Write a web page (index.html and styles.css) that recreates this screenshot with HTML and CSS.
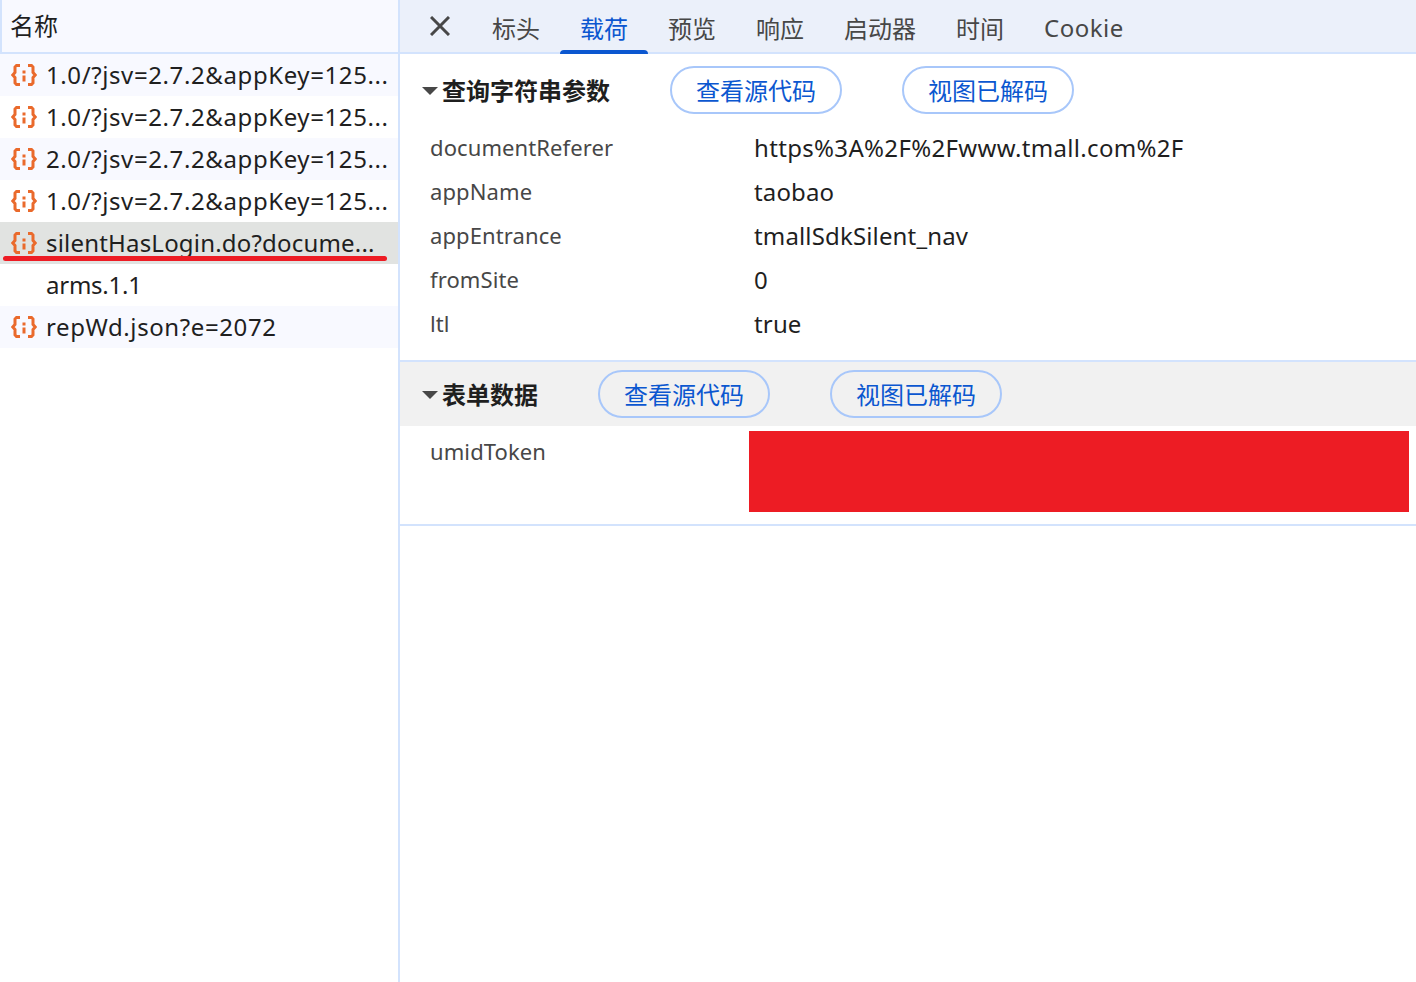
FILE: index.html
```html
<!DOCTYPE html>
<html lang="zh">
<head>
<meta charset="utf-8">
<title>载荷</title>
<link rel="stylesheet" href="styles.css">
</head>
<body>
<div class="app">
  <aside class="list">
    <div class="list-head">名称</div>
    <div class="row alt"><svg class="ico" viewBox="0 0 26 22"><use href="#brace"/></svg><span class="name num">1.0/?jsv=2.7.2&amp;appKey=125...</span></div>
    <div class="row"><svg class="ico" viewBox="0 0 26 22"><use href="#brace"/></svg><span class="name num">1.0/?jsv=2.7.2&amp;appKey=125...</span></div>
    <div class="row alt"><svg class="ico" viewBox="0 0 26 22"><use href="#brace"/></svg><span class="name num">2.0/?jsv=2.7.2&amp;appKey=125...</span></div>
    <div class="row"><svg class="ico" viewBox="0 0 26 22"><use href="#brace"/></svg><span class="name num">1.0/?jsv=2.7.2&amp;appKey=125...</span></div>
    <div class="row selected"><svg class="ico" viewBox="0 0 26 22"><use href="#brace"/></svg><span class="name">silentHasLogin.do?docume...</span><i class="underline"></i></div>
    <div class="row"><span class="ico-gap"></span><span class="name short">arms.1.1</span></div>
    <div class="row alt"><svg class="ico" viewBox="0 0 26 22"><use href="#brace"/></svg><span class="name num">repWd.json?e=2072</span></div>
  </aside>
  <main class="detail">
    <nav class="tabs">
      <svg class="close" viewBox="0 0 20 20"><path d="M1 1 19 19M19 1 1 19"/></svg>
      <span class="tab">标头</span>
      <span class="tab active">载荷</span>
      <span class="tab">预览</span>
      <span class="tab">响应</span>
      <span class="tab">启动器</span>
      <span class="tab">时间</span>
      <span class="tab">Cookie</span>
    </nav>
    <section class="query">
      <div class="sec-head tall">
        <i class="caret"></i><h2 class="sec-title">查询字符串参数</h2>
        <span class="pill">查看源代码</span>
        <span class="pill">视图已解码</span>
      </div>
      <dl class="params">
        <div class="param"><dt>documentReferer</dt><dd class="wide">https%3A%2F%2Fwww.tmall.com%2F</dd></div>
        <div class="param"><dt>appName</dt><dd>taobao</dd></div>
        <div class="param"><dt>appEntrance</dt><dd>tmallSdkSilent_nav</dd></div>
        <div class="param"><dt>fromSite</dt><dd>0</dd></div>
        <div class="param"><dt>ltl</dt><dd>true</dd></div>
      </dl>
    </section>
    <section class="form">
      <div class="sec-head shaded">
        <i class="caret"></i><h2 class="sec-title">表单数据</h2>
        <span class="pill">查看源代码</span>
        <span class="pill">视图已解码</span>
      </div>
      <div class="token">
        <span class="token-key">umidToken</span>
        <div class="redact"></div>
      </div>
    </section>
  </main>
</div>
<svg class="defs" width="0" height="0">
  <symbol id="brace" viewBox="0 0 26 22">
    <path fill="none" stroke="#ea6a2c" stroke-width="3" d="M9 1.500H5.500L4 3V8.500L1.800 11 4 13.500V19L5.500 20.500H9M17 1.500H20.500L22 3V8.500L24.200 11 22 13.500V19L20.500 20.500H17"/>
    <path fill="none" stroke="#ea6a2c" stroke-width="3" d="M13 6.500V9.500M13 11.500V17.500"/>
  </symbol>
</svg>
</body>
</html>
```
FILE: styles.css
```css
* { box-sizing: border-box; }
html, body { margin: 0; height: 100%; background: #fff; }
body {
  font-family: "Noto Sans", "Open Sans", "Noto Sans CJK SC", sans-serif;
  font-size: 24px;
  color: #1f1f1f;
  overflow: hidden;
}
.defs { position: absolute; }
.app { display: flex; height: 982px; }
.list { width: 400px; flex: none; border-right: 2px solid #d3e3fd; }
.list-head {
  height: 54px;
  padding: 0 0 4px 8px;
  display: flex;
  align-items: center;
  background: #f8f9ff;
  border-left: 2px solid #d3e3fd;
  border-bottom: 2px solid #d3e3fd;
  font-family: "Noto Sans CJK SC", sans-serif;
}
.row {
  position: relative;
  height: 42px;
  display: flex;
  align-items: center;
  padding-left: 11px;
  white-space: nowrap;
}
.row.alt { background: #f8f9ff; }
.row.selected { background: #e1e3e1; }
.ico { width: 26px; height: 22px; flex: none; margin-right: 9px; }
.ico-gap { width: 26px; flex: none; margin-right: 9px; }
.name { letter-spacing: 0.19px; padding-bottom: 2px; }
.name.num { letter-spacing: 0.6px; }
.name.short { letter-spacing: -0.25px; }
.underline {
  position: absolute;
  left: 3px;
  top: 34px;
  width: 384px;
  height: 5px;
  border-radius: 3px;
  background: #ed1c24;
}
.detail { flex: 1; min-width: 0; }
.tabs {
  height: 54px;
  display: flex;
  background: #ebf0fa;
  border-bottom: 2px solid #d3e3fd;
  padding-left: 30px;
  font-family: "Noto Sans CJK SC", sans-serif;
  color: #474747;
}
.close { width: 20px; height: 20px; margin: 16px 22px 0 0; flex: none; }
.close path { stroke: #474747; stroke-width: 3; fill: none; }
.tab {
  position: relative;
  height: 54px;
  padding: 0 20px;
  line-height: 55px;
}
.tab.active { color: #0b57d0; }
.tab.active::after {
  content: "";
  position: absolute;
  left: 0;
  right: 0;
  bottom: 0;
  height: 4px;
  border-radius: 4px 4px 0 0;
  background: #0b57d0;
}
.tab:last-child { font-family: "Noto Sans", sans-serif; letter-spacing: 0.5px; }
.sec-head {
  height: 64px;
  display: flex;
  align-items: center;
  padding-left: 22px;
}
.sec-head.tall { height: 72px; }
.shaded { background: #f1f1f1; }
.caret {
  width: 0;
  height: 0;
  flex: none;
  margin: 2px 4px 0 0;
  border-left: 8px solid transparent;
  border-right: 8px solid transparent;
  border-top: 8px solid #474747;
}
.sec-title {
  margin: 0;
  padding-bottom: 2px;
  font-size: 24px;
  font-weight: 700;
  font-family: "Noto Sans CJK SC", sans-serif;
}
.pill {
  width: 172px;
  height: 48px;
  margin-left: 60px;
  padding-bottom: 2px;
  display: flex;
  align-items: center;
  justify-content: center;
  border: 2px solid #a8c7fa;
  border-radius: 24px;
  color: #0b57d0;
  font-family: "Noto Sans CJK SC", sans-serif;
}
.query { border-bottom: 2px solid #d3e3fd; height: 308px; }
.params { margin: 0; }
.param { display: flex; height: 44px; align-items: center; padding-bottom: 2px; }
.param dt { width: 354px; padding-left: 30px; font-size: 22px; letter-spacing: 0.1px; color: #474747; flex: none; }
.param dd { margin: 0; letter-spacing: 0.15px; }
.param dd.wide { letter-spacing: 0.33px; }
.form { height: 164px; border-bottom: 2px solid #d3e3fd; }
.token { position: relative; padding: 5px 0 0 30px; font-size: 22px; letter-spacing: 0.1px; color: #474747; line-height: 40px; }
.token-key { display: block; }
.redact {
  position: absolute;
  left: 349px;
  top: 5px;
  width: 660px;
  height: 81px;
  background: #ed1c24;
}
```
